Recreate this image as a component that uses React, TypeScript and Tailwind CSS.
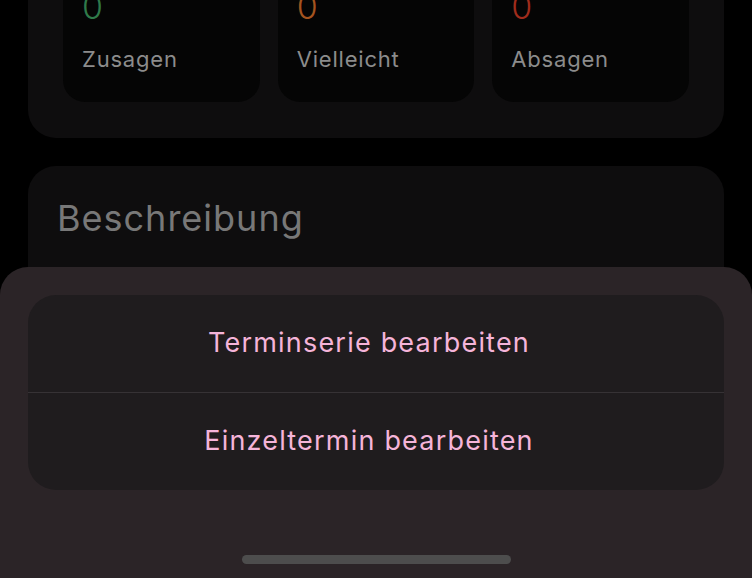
import React from 'react';

const stats = [
  { label: 'Zusagen', value: 0, color: 'text-[#2f7a4a]' },
  { label: 'Vielleicht', value: 0, color: 'text-[#a4541f]' },
  { label: 'Absagen', value: 0, color: 'text-[#a02c1c]' },
];

const actions = ['Terminserie bearbeiten', 'Einzeltermin bearbeiten'];

export default function App() {
  return (
    <div
      className="relative h-[578px] w-[752px] overflow-hidden bg-black"
      style={{ fontFamily: 'Inter, "Noto Sans", sans-serif' }}
    >
      {/* event detail content, scrolled */}
      <div className="px-[28px] mt-[-68px] flex flex-col gap-[28px]">
        <div className="rounded-[28px] bg-[#0e0d0e] pt-[35px] pb-[36px] px-[35px] flex gap-[18px]">
          {stats.map(s => (
            <div key={s.label} className="flex-1 rounded-[22px] bg-[#050505] pl-[19px] pt-[20px] pb-[29px]">
              <div className={`text-[34px] leading-[40px] font-light ${s.color}`}>{s.value}</div>
              <div className="mt-[18px] text-[22px] leading-[28px] tracking-[0.8px] text-[#8c8c8c]">
                {s.label}
              </div>
            </div>
          ))}
        </div>
        <div className="rounded-[28px] bg-[#0e0d0e] h-[300px] px-[29px] pt-[29px]">
          <div className="text-[36px] leading-[46px] tracking-[1px] text-[#787878]">Beschreibung</div>
        </div>
      </div>

      {/* action sheet */}
      <div className="absolute inset-x-0 bottom-0 h-[311px] rounded-t-[28px] bg-[#2b2427] px-[28px] pt-[28px] flex flex-col">
        <div className="rounded-[28px] bg-[#1f1c1e] overflow-hidden">
          {actions.map((a, i) => (
            <div key={a}>
              {i > 0 && <div className="h-px bg-[#363235]" />}
              <button className="w-full h-[97px] pr-[14px] flex items-center justify-center text-[27px] tracking-[1.2px] text-[#f5b4d9]">
                {a}
              </button>
            </div>
          ))}
        </div>
        <div className="mt-auto mb-[14px] mx-auto h-[9px] w-[269px] rounded-full bg-[#4d4d4d]" />
      </div>
    </div>
  );
}
